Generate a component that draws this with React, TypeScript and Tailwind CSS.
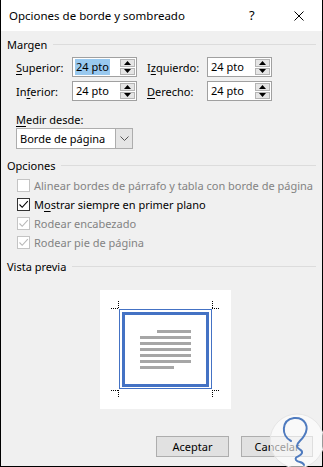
import type { ReactNode } from "react";

// Diálogo "Opciones de borde y sombreado" (estilo Windows 10)

function U({ children }: { children: ReactNode }) {
  return <span className="underline underline-offset-[2px] decoration-1">{children}</span>;
}

function GroupHeader({ title }: { title: string }) {
  return (
    <div className="flex items-center h-[16px] gap-[6px]">
      <span>{title}</span>
      <div className="flex-1 h-px bg-[#dcdcdc]" />
    </div>
  );
}

function Arrow({ up }: { up?: boolean }) {
  return (
    <svg width="7" height="4" viewBox="0 0 7 4" className="block">
      {up ? <path d="M3.5 0 L7 4 L0 4 Z" fill="#000" /> : <path d="M0 0 L7 0 L3.5 4 Z" fill="#000" />}
    </svg>
  );
}

function SpinField({ value, selected }: { value: string; selected?: boolean }) {
  return (
    <div className="flex h-[20px] w-[65px] border border-[#a0a0a0] bg-white">
      <div className="flex-1 flex items-center pl-[2px]">
        <span className={selected ? "bg-[#99c9ef] px-px leading-[16px]" : "px-px leading-[16px]"}>{value}</span>
      </div>
      <div className="w-[17px] flex flex-col gap-px p-px">
        <div className="flex-1 flex items-center justify-center bg-[#e5e5e5] border border-[#b4b4b4]">
          <Arrow up />
        </div>
        <div className="flex-1 flex items-center justify-center bg-[#e5e5e5] border border-[#b4b4b4]">
          <Arrow />
        </div>
      </div>
    </div>
  );
}

function Check({ checked, disabled, children }: { checked?: boolean; disabled?: boolean; children: ReactNode }) {
  return (
    <div className="flex items-center h-[19px] gap-[4px]">
      <span
        className={`w-[13px] h-[13px] border bg-white flex items-center justify-center shrink-0 ${
          disabled ? "border-[#c4c4c4]" : "border-[#333333]"
        }`}
      >
        {checked && (
          <svg width="11" height="11" viewBox="0 0 11 11">
            <path d="M1.5 5.5 L4.2 8.3 L9.8 2.2" fill="none" stroke={disabled ? "#b8b8b8" : "#000"} strokeWidth="1.1" />
          </svg>
        )}
      </span>
      <span className={`whitespace-nowrap ${disabled ? "text-[#838383]" : "text-black"}`}>{children}</span>
    </div>
  );
}

function Preview() {
  const lines = [
    [57, 91],
    [40, 91],
    [40, 91],
    [40, 91],
    [40, 91],
    [40, 91],
    [40, 74],
  ];
  return (
    <div className="w-[131px] h-[119px] bg-white">
      <svg width="131" height="119" viewBox="0 0 131 119" shapeRendering="crispEdges">
        {/* marcas de esquina */}
        <g stroke="#000" strokeWidth="1" strokeDasharray="1 1">
          <path d="M11 18.5 H19 M18.5 11 V19" />
          <path d="M112 18.5 H120 M112.5 11 V19" />
          <path d="M11 100.5 H19 M18.5 100 V108" />
          <path d="M112 100.5 H120 M112.5 100 V108" />
        </g>
        <rect x="19.5" y="19.5" width="92" height="79" fill="none" stroke="#4472c4" strokeWidth="1" />
        <rect x="23.5" y="23.5" width="84" height="72" fill="none" stroke="#4472c4" strokeWidth="3" />
        {lines.map(([a, b], i) => (
          <rect key={i} x={a} y={40 + i * 6} width={b - a} height="3" fill="#a6a6a6" />
        ))}
      </svg>
    </div>
  );
}

function Watermark() {
  return (
    <svg
      width="60"
      height="60"
      viewBox="0 0 60 60"
      className="absolute left-[266px] top-[411px] pointer-events-none"
      aria-hidden="true"
    >
      <circle cx="30" cy="30" r="27" fill="#ffffff" fillOpacity="0.6" stroke="#e6e6e6" strokeWidth="1" />
      <path
        d="M24 30 C14 25 14 9 27 7 C38 6 43 16 37 25 C34 30 30 31 30 35 C30 39 36 38 35 42 C34 46 27 45 29 49 C31 52 36 50 37 54"
        fill="none"
        stroke="#4f7bbf"
        strokeWidth="2"
        strokeLinecap="round"
      />
    </svg>
  );
}

export default function App() {
  return (
    <div className="relative w-[323px] h-[467px] bg-[#f0f0f0] border-x border-b border-black flex flex-col text-[11px] text-black font-['Segoe_UI','Noto_Sans',sans-serif] leading-none">
      {/* ── Barra de título ── */}
      <div className="h-[31px] bg-white flex items-center pl-[8px] shrink-0">
        <span className="flex-1 text-[11.5px]">Opciones de borde y sombreado</span>
        <span className="w-[12px] text-[13px] mr-[33px]">?</span>
        <svg width="10" height="10" viewBox="0 0 10 10" className="mr-[18px]">
          <path d="M0.5 0.5 L9.5 9.5 M9.5 0.5 L0.5 9.5" stroke="#000" strokeWidth="1" />
        </svg>
      </div>

      <div className="flex flex-col px-[6px]">
        {/* ── Margen ── */}
        <div className="mt-[5px]">
          <GroupHeader title="Margen" />
        </div>
        <div className="pl-[9px] flex flex-col gap-[4px] mt-[5px]">
          <div className="flex items-center">
            <span className="w-[56px]">
              <U>S</U>uperior:
            </span>
            <SpinField value="24 pto" selected />
            <span className="w-[60px] ml-[10px]">
              I<U>z</U>quierdo:
            </span>
            <SpinField value="24 pto" />
          </div>
          <div className="flex items-center">
            <span className="w-[56px]">
              In<U>f</U>erior:
            </span>
            <SpinField value="24 pto" />
            <span className="w-[60px] ml-[10px]">
              <U>D</U>erecho:
            </span>
            <SpinField value="24 pto" />
          </div>
          <div className="h-[16px] flex items-center mt-[6px]">
            <span>
              <U>M</U>edir desde:
            </span>
          </div>
          <div className="flex h-[21px] w-[117px] border border-[#adadad] bg-white -mt-[3px]">
            <span className="flex-1 flex items-center pl-[3px]">Borde de página</span>
            <span className="w-[17px] flex items-center justify-center bg-[#e5e5e5] border-l border-[#adadad]">
              <svg width="9" height="5" viewBox="0 0 9 5">
                <path d="M0.5 0.5 L4.5 4.5 L8.5 0.5" fill="none" stroke="#555" strokeWidth="1" />
              </svg>
            </span>
          </div>
        </div>

        {/* ── Opciones ── */}
        <div className="mt-[8px]">
          <GroupHeader title="Opciones" />
        </div>
        <div className="pl-[10px] flex flex-col mt-[3px]">
          <Check disabled>Alinear bordes de párrafo y tabla con borde de página</Check>
          <Check checked>
            M<U>o</U>strar siempre en primer plano
          </Check>
          <Check checked disabled>
            Rodear encabezado
          </Check>
          <Check checked disabled>
            Rodear pie de página
          </Check>
        </div>

        {/* ── Vista previa ── */}
        <div className="mt-[6px]">
          <GroupHeader title="Vista previa" />
        </div>
        <div className="mt-[16px] pl-[93px]">
          <Preview />
        </div>

        {/* ── Botones ── */}
        <div className="mt-[27px] flex justify-end gap-[12px] pr-[3px]">
          <button className="w-[73px] h-[21px] bg-[#e1e1e1] border border-[#adadad]">Aceptar</button>
          <button className="w-[72px] h-[21px] bg-[#e1e1e1] border border-[#adadad]">Cancelar</button>
        </div>
      </div>

      <Watermark />
    </div>
  );
}
